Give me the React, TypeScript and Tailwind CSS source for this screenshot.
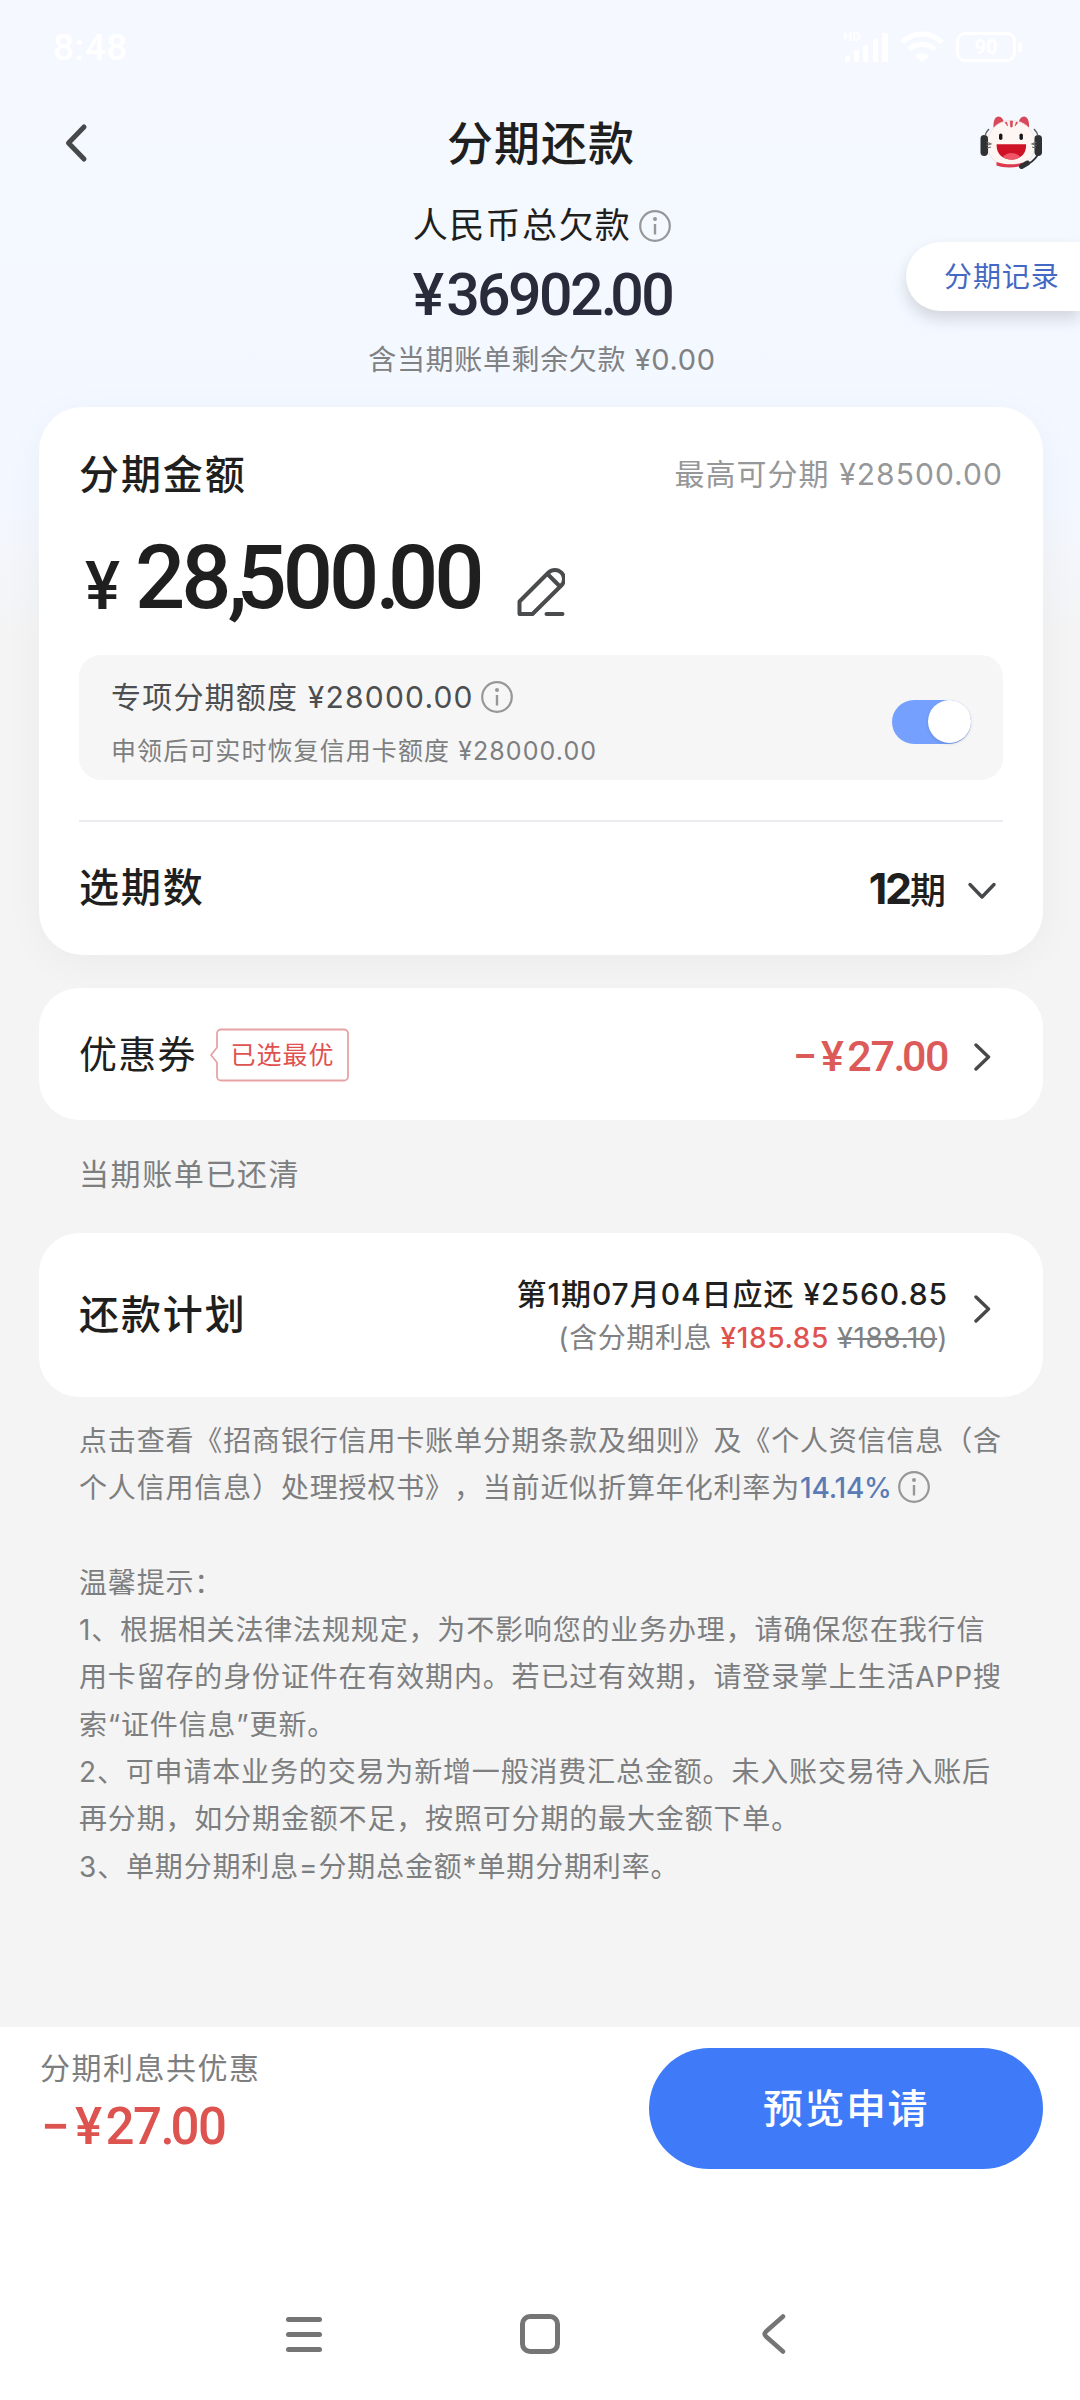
import { ReactNode } from 'react'

const tips = [
  '1、根据相关法律法规规定，为不影响您的业务办理，请确保您在我行信',
  '用卡留存的身份证件在有效期内。若已过有效期，请登录掌上生活APP搜',
  '索“证件信息”更新。',
  '2、可申请本业务的交易为新增一般消费汇总金额。未入账交易待入账后',
  '再分期，如分期金额不足，按照可分期的最大金额下单。',
  '3、单期分期利息=分期总金额*单期分期利率。',
]

function InfoIcon({ className = '' }: { className?: string }) {
  return (
    <svg
      viewBox="0 0 32 32"
      className={`h-8 w-8 flex-none text-[#969799] ${className}`}
      fill="none"
      stroke="currentColor"
    >
      <circle cx="16" cy="16" r="14.8" strokeWidth="2.2" />
      <path d="M16 14v10.5" strokeWidth="2.4" />
      <circle cx="16" cy="9" r="2" fill="currentColor" stroke="none" />
    </svg>
  )
}

function ChevronRight() {
  return (
    <svg
      viewBox="0 0 18 30"
      className="h-[30px] w-[18px] flex-none"
      fill="none"
      stroke="#47484a"
      strokeWidth="3.4"
      strokeLinecap="round"
      strokeLinejoin="round"
    >
      <path d="M2 3l12.5 12L2 27" />
    </svg>
  )
}

function StatusBar() {
  return (
    <div className="flex h-[94px] items-center justify-between pr-[58px] pl-[53px] text-white">
      <span className="font-[Roboto] text-[37px] leading-none font-medium tracking-[0.5px]">
        8:48
      </span>
      <div className="flex items-center">
        <div className="relative h-8 w-12">
          <span className="absolute -top-px left-0 font-[Roboto] text-[13px] leading-[14px] font-bold">
            HD
          </span>
          <svg viewBox="0 0 48 32" className="h-8 w-12" fill="currentColor">
            <rect x="2" y="25" width="5" height="6" rx="1.5" />
            <rect x="11" y="19" width="5" height="12" rx="1.5" />
            <rect x="20" y="14" width="5" height="17" rx="1.5" />
            <rect x="30" y="8" width="5" height="23" rx="1.5" />
            <rect x="39" y="2" width="6" height="29" rx="1.5" />
          </svg>
        </div>
        <svg
          viewBox="0 0 44 32"
          className="ml-[9px] h-8 w-11"
          fill="none"
          stroke="currentColor"
          strokeWidth="5"
        >
          <path d="M2 11.5a28 28 0 0 1 40 0" />
          <path d="M9 18.5a18.5 18.5 0 0 1 26 0" />
          <path d="M15 25a10 10 0 0 1 14 0l-7 6z" fill="currentColor" stroke="none" />
        </svg>
        <div className="ml-[12px] flex h-[30px] w-[60px] items-center justify-center rounded-[9px] border-[3px] border-white font-[Roboto] text-[20px] leading-none font-bold">
          90
        </div>
        <div className="ml-[2px] h-[10px] w-[4px] rounded-r-full bg-white" />
      </div>
    </div>
  )
}

function Mascot() {
  return (
    <svg viewBox="0 0 64 56" className="h-14 w-16">
      <path d="M13.5 13C13 5 15.500 1.500 18.500 1.500c3 0 5 3 5.500 7z" fill="#d9475a" />
      <path d="M49 13c.5-8-2-11.500-5-11.500-3 0-5 3-5.500 7z" fill="#d9475a" />
      <path
        d="M31.300 5.500c13 0 23.700 9 23.700 24 0 13-9 22-23.700 22S7.500 42.500 7.500 29.500c0-15 10.700-24 23.800-24z"
        fill="#fdf6f3"
        stroke="#eadfe0"
        strokeWidth="0.8"
      />
      <path d="M16.5 47c9 3 19 3 26 .5v3c-7 2.500-20 2.500-26 0z" fill="#dc3b4e" />
      <path
        d="M30.2 6h2.400l-.4 6h-1.600zM25 7.500l1.600-.5 1 4zM37.800 7.500l-1.600-.5-1 4z"
        fill="#d9475a"
        stroke="#d9475a"
        strokeWidth="0.6"
      />
      <rect x="0.5" y="20" width="7.5" height="21" rx="3.7" fill="#2f3133" />
      <rect x="54.500" y="20" width="7.5" height="21" rx="3.7" fill="#2f3133" />
      <path
        d="M5 21c.5-3 2-5 4-7M58 21c-.5-3-2-5-4-7"
        stroke="#5a5c5e"
        strokeWidth="1.4"
        fill="none"
      />
      <path
        d="M6.5 27l4.500 2-4.500 1.500M7 33l4-1M56.500 27l-4.500 2 4.500 1.500M56 33l-4-1"
        stroke="#666"
        strokeWidth="1.1"
        fill="none"
      />
      <rect x="19" y="18.5" width="3.400" height="6.500" rx="1.700" fill="#17181a" />
      <rect x="39.500" y="18.5" width="3.400" height="6.500" rx="1.700" fill="#17181a" />
      <path d="M16.700 29.300H46c.8 9-5.500 15.200-14.600 15.200s-15.500-6.200-14.700-15.200z" fill="#d01226" />
      <path d="M23 42c4-5.500 13-5.500 17 0-5 3.500-12 3.500-17 0z" fill="#ef5566" />
      <path d="M58 39c-2 5-5 7-9 9.500" stroke="#2f3133" strokeWidth="2" fill="none" />
      <path d="M47.500 48l-6 3.500" stroke="#2f3133" strokeWidth="5" strokeLinecap="round" />
    </svg>
  )
}

function BestTag({ children }: { children: ReactNode }) {
  return (
    <div className="relative mt-[1px] ml-[12px] flex h-[54px] w-[140px] items-center pt-[1px] pl-[22px]">
      <svg
        viewBox="0 0 140 54"
        className="absolute inset-0 h-full w-full"
        fill="none"
        stroke="#e7a3a3"
        strokeWidth="1.8"
        strokeLinejoin="round"
      >
        <path d="M12 1.500h123a4 4 0 0 1 4 4v43a4 4 0 0 1-4 4H12a4 4 0 0 1-4-4V34.500L2 27l6-7.500v-14a4 4 0 0 1 4-4z" />
      </svg>
      <span className="text-[25px] leading-none tracking-[1px] text-[#e0524f]">{children}</span>
    </div>
  )
}

function AmountCard() {
  return (
    <section className="mr-[37px] ml-[39px] h-[548px] rounded-[44px] bg-white px-10 shadow-[0_8px_40px_rgba(0,0,0,0.04)]">
      <div className="flex h-[134px] items-center justify-between">
        <h2 className="mt-[1px] text-[40px] leading-none font-medium tracking-[1.9px]">分期金额</h2>
        <span className="text-[30px] leading-none tracking-[1.05px] text-[#969799]">
          最高可分期 ¥28500.00
        </span>
      </div>
      <div className="flex h-[114px] items-end pl-[6px] font-[Roboto] font-medium text-[#1f1f20]">
        <span className="mb-[36px] text-[66px] leading-[64px]">¥</span>
        <span className="mb-[32px] ml-[15px] text-[88.5px] leading-[90px] tracking-[-4px]">
          28<span className="tracking-[-11px]">,</span>500
          <span className="tracking-[-12px]">.</span>00
        </span>
        <svg
          viewBox="0 0 48 50"
          className="mb-[38px] ml-[36px] h-[50px] w-12"
          fill="none"
          stroke="#4a4b4d"
          strokeWidth="4"
          strokeLinecap="round"
          strokeLinejoin="round"
        >
          <path d="M31.500 5.500a9 9 0 0 1 12.800 13L15.500 47H2.500V34.500z" />
          <path d="M31 7.500l11.500 11.500M29.500 47h16" />
        </svg>
      </div>
      <div className="flex h-[125px] items-center justify-between rounded-[22px] bg-[#f6f6f6] px-8">
        <div className="mt-[13px]">
          <div className="flex h-[44px] items-center">
            <span className="text-[30px] leading-none tracking-[1.2px] text-[#4d4e50]">
              专项分期额度 ¥28000.00
            </span>
            <InfoIcon className="ml-[7px]" />
          </div>
          <p className="mt-[10px] h-[44px] text-[25px] leading-[44px] tracking-[1.08px] text-[#7d7e80]">
            申领后可实时恢复信用卡额度 ¥28000.00
          </p>
        </div>
        <div className="mt-[8px] flex h-[44px] w-[79px] justify-end rounded-full bg-[#75a0fd]">
          <span className="h-[43px] w-[43px] rounded-full bg-white shadow-[0_1px_3px_rgba(0,0,0,0.15)]" />
        </div>
      </div>
      <div className="mt-10 flex h-[134px] items-center justify-between border-t-2 border-[#ebedf0]">
        <h2 className="text-[40px] leading-none font-medium tracking-[1.9px]">选期数</h2>
        <div className="flex items-center pr-[6px]">
          <span className="text-[36px] leading-none font-medium">
            <span className="font-[Inter] text-[43px] font-bold tracking-[-2.2px]">12</span>期
          </span>
          <svg
            viewBox="0 0 30 20"
            className="mt-[5px] ml-[21px] h-5 w-[30px]"
            fill="none"
            stroke="#47484a"
            strokeWidth="3.4"
            strokeLinecap="round"
            strokeLinejoin="round"
          >
            <path d="M3 3.500l12 12.500L27 3.500" />
          </svg>
        </div>
      </div>
    </section>
  )
}

export default function App() {
  return (
    <div className="flex h-[2400px] w-[1080px] flex-col overflow-hidden bg-[#f4f4f4] bg-[linear-gradient(180deg,#f5f9ff_0px,#f3f7ff_500px,#f4f4f4_640px)] font-['Inter','Noto_Sans_CJK_SC',sans-serif] whitespace-nowrap text-[#1f1f20] [text-spacing-trim:space-all]">
      <StatusBar />
      <header className="flex h-[98px] items-center justify-between pr-[36px] pl-[60px]">
        <svg
          viewBox="0 0 30 42"
          className="h-[42px] w-[30px]"
          fill="none"
          stroke="#47484a"
          strokeWidth="5"
          strokeLinecap="round"
          strokeLinejoin="round"
        >
          <path d="M24 5L8.500 21 24 37" />
        </svg>
        <h1 className="pl-[12px] text-[46px] leading-none font-medium tracking-[1px]">分期还款</h1>
        <Mascot />
      </header>

      <div className="relative flex h-[215px] flex-col items-center">
        <div className="mt-[9px] ml-[4px] flex h-[48px] items-center">
          <span className="text-[35px] leading-none tracking-[1.4px]">人民币总欠款</span>
          <InfoIcon className="mt-[1px] ml-2" />
        </div>
        <div className="mt-[16px] flex h-[60px] pl-[5px] font-[Roboto] text-[59px] leading-[60px] font-medium text-[#2a2b3a]">
          ¥
          <span className="ml-[2px] tracking-[-2.6px]">
            36902<span className="tracking-[-7px]">.</span>00
          </span>
        </div>
        <p className="mt-[13px] ml-[4px] h-[44px] text-[28px] leading-[44px] tracking-[0.65px] text-[#808183]">
          含当期账单剩余欠款 <span className="text-[29px]">¥0.00</span>
        </p>
        <a className="absolute top-[50px] right-0 flex h-[69px] w-[174px] items-center rounded-l-full bg-white pl-[38px] text-[28px] tracking-[0.9px] text-[#4468c4] shadow-[0_8px_16px_rgba(0,0,0,0.14)]">
          分期记录
        </a>
      </div>

      <AmountCard />

      <section className="mt-[33px] mr-[37px] ml-[39px] flex h-[132px] items-center rounded-[40px] bg-white pr-[51px] pl-10">
        <h2 className="text-[38px] leading-none tracking-[1.2px]">优惠券</h2>
        <BestTag>已选最优</BestTag>
        <span className="mt-[5px] mr-[26px] ml-auto flex font-[Roboto] text-[43px] leading-none font-medium tracking-[-1.4px] text-[#dc5b59]">
          −<span className="ml-[5px]">¥</span>
          <span className="ml-[5px]">
            27<span className="tracking-[-3.5px]">.</span>00
          </span>
        </span>
        <div className="mt-[5px]">
          <ChevronRight />
        </div>
      </section>

      <p className="h-[113px] pl-[79px] text-[30px] leading-[108px] tracking-[1.6px] text-[#7d7e80]">
        当期账单已还清
      </p>

      <section className="mr-[37px] ml-[39px] flex h-[164px] items-center justify-between rounded-[40px] bg-white pr-[51px] pl-10">
        <h2 className="text-[40px] leading-none font-medium tracking-[1.9px]">还款计划</h2>
        <div className="mb-[6px] flex items-center">
          <div className="mt-[8px] mr-[26px] text-right">
            <p className="text-[30px] leading-[44px] font-medium tracking-[0.95px]">
              第1期07月04日应还 ¥2560.85
            </p>
            <p className="text-[28px] leading-[44px] tracking-[0.6px] text-[#808183]">
              (含分期利息 <span className="font-medium text-[#e0524f]">¥185.85</span>{' '}
              <span className="line-through">¥188.10</span>)
            </p>
          </div>
          <div className="mb-[7px]">
            <ChevronRight />
          </div>
        </div>
      </section>

      <div className="mt-[21px] pl-[79px] text-[28px] leading-[47.3px] tracking-[0.84px] text-[#7d7e80]">
        <p>点击查看《招商银行信用卡账单分期条款及细则》及《个人资信信息（含</p>
        <p className="flex items-center">
          个人信用信息）处理授权书》，当前近似折算年化利率为
          <span className="font-medium tracking-[-0.2px] text-[#5b7bb5]">14.14%</span>
          <InfoIcon className="mb-1 ml-[6px]" />
        </p>
        <p className="mt-[47.3px]">温馨提示：</p>
        {tips.map((tip) => (
          <p key={tip}>{tip}</p>
        ))}
      </div>

      <footer className="mt-auto flex h-[373px] flex-col bg-white">
        <div className="flex h-[162px] justify-between pt-[21px] pr-[37px] pl-10">
          <div>
            <p className="text-[30px] leading-10 tracking-[1.5px] text-[#7d7e80]">
              分期利息共优惠
            </p>
            <p className="mt-[7px] ml-[1px] flex font-[Roboto] text-[51px] leading-[64px] font-medium tracking-[-1.6px] text-[#dc5350]">
              −<span className="ml-[7px]">¥</span>
              <span className="ml-[5px]">
                27<span className="tracking-[-4px]">.</span>00
              </span>
            </p>
          </div>
          <button className="h-[121px] w-[394px] rounded-full bg-[#3f7bf8] text-[40px] leading-none font-medium tracking-[1.5px] text-white">
            预览申请
          </button>
        </div>
        <nav className="mt-[123px] flex h-[44px] items-center text-[#757575]">
          <div className="ml-[286px] flex w-9 flex-col gap-[10px]">
            <span className="h-[5px] rounded-full bg-current" />
            <span className="h-[5px] rounded-full bg-current" />
            <span className="h-[5px] rounded-full bg-current" />
          </div>
          <span className="ml-[198px] h-10 w-10 rounded-[10px] border-[5px] border-current" />
          <svg
            viewBox="0 0 28 44"
            className="ml-[200px] h-11 w-7"
            fill="none"
            stroke="currentColor"
            strokeWidth="4.5"
            strokeLinecap="round"
            strokeLinejoin="round"
          >
            <path d="M23 4.500L6 19.500q-2.500 2.500 0 5L23 39.500" />
          </svg>
        </nav>
      </footer>
    </div>
  )
}
